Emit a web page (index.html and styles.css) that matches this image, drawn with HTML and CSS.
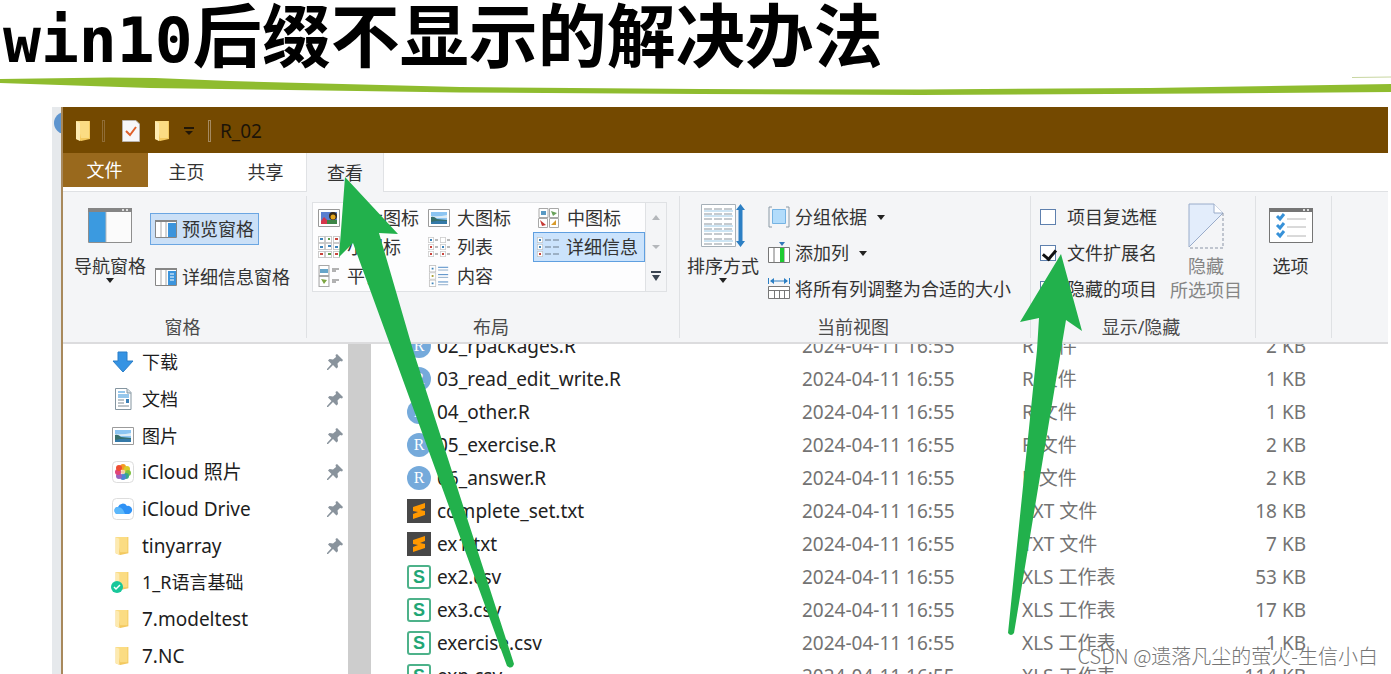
FILE: index.html
```html
<!DOCTYPE html>
<html lang="zh-CN">
<head>
<meta charset="utf-8">
<title>win10后缀不显示的解决办法</title>
<link rel="stylesheet" href="styles.css">
</head>
<body>
<svg class="defs" aria-hidden="true">
  <symbol id="folder" viewBox="0 0 16 22"><path d="M1 1h14v18l-9 2-5-2z" fill="#f3c95f"/><path d="M2 1h12v17H6z" fill="#fbdc83"/><path d="M1 1l4 2v18l-4-2z" fill="#fdeab0"/></symbol>
  <symbol id="pin" viewBox="0 0 16 16"><path d="M10 0l6 6-1 1.500-2-.5-2.500 2.500.5 3.500-1.500 1.500-3.500-3.500L1 16H0v-1l4.500-5L1 6.500 2.500 5l3.500.5L9 3l-.5-2z" fill="#89939c"/></symbol>
  <symbol id="photo" viewBox="0 0 22 18"><path d="M.5.500h21v17H.5z" fill="#fff" stroke="#9b9b9b"/><path d="M3 3h16v12H3z" fill="#8cc5f2"/><path d="M3 7q8 1 16-1v3H3z" fill="#dcecf6"/><path d="M3 8q3-1 6 2l10 1v4H3z" fill="#376f6b"/><path d="M3 13q8-2 16-1v3H3z" fill="#3479a8"/></symbol>
  <symbol id="r" viewBox="0 0 24 24"><circle cx="12" cy="12" r="12" fill="#75aadb"/><text x="12" y="17" text-anchor="middle" class="r-letter">R</text></symbol>
  <symbol id="sub" viewBox="0 0 24 24"><path d="M0 0h24v24H0z" fill="#474747"/><path d="M6 8l12-4v5l-5 2 5 1v4L6 20v-5l5-2-5-1z" fill="#ff9800"/></symbol>
  <symbol id="xls" viewBox="0 0 24 24"><rect x="1" y="1" width="22" height="22" rx="2" fill="#fff" stroke="#4db28a" stroke-width="2"/><text x="12" y="18" text-anchor="middle" class="s-letter">S</text></symbol>
  <symbol id="tile" viewBox="0 0 10 10"><path d="M.5.500h9v9h-9z" fill="#fff" stroke="#a8a8a8"/></symbol>
</svg>

<h1 class="title"><span class="latin">win10</span>后缀不显示的解决办法</h1>
<svg class="swoosh" viewBox="0 76 1391 31" preserveAspectRatio="none" aria-hidden="true"><path d="M0 79L110 77.500 155 78 230 81 460 87 700 89 920 89.500 1150 88 1391 84V92L1200 93.500 920 95 700 94 460 92.500 150 88 0 83z" fill="#8fbc2f"/><path d="M1352 77.500L1391 77" stroke="#c8d6a0"/></svg>

<main class="stage">
  <div class="behind"><svg class="behind-dot" viewBox="0 0 9 24"><circle cx="13" cy="12" r="11" fill="#5e95cf"/></svg></div>
  <section class="window">
    <header class="titlebar">
      <svg class="tb-folder"><use href="#folder"/></svg>
      <span class="tb-bar"></span>
      <svg class="tb-doc" viewBox="0 0 18 22"><path d="M.5.500H14l3.500 3.500v17.500H.5z" fill="#f7f7f9" stroke="#b8b2ac"/><path d="M4 11l4 4 6-8" fill="none" stroke="#e0602a" stroke-width="2"/></svg>
      <svg class="tb-folder"><use href="#folder"/></svg>
      <svg class="tb-more" viewBox="0 0 10 8"><path d="M0 0h10v2H0zM1 4h8L5 8z" fill="#211708"/></svg>
      <span class="tb-bar light"></span>
      <span class="tb-name">R_02</span>
    </header>

    <nav class="tabs">
      <button class="tab file">文件</button>
      <button class="tab">主页</button>
      <button class="tab">共享</button>
      <button class="tab active">查看</button>
    </nav>

    <div class="ribbon">
      <div class="group g-panes">
        <div class="group-body">
          <button class="big">
            <span class="big-icon"><svg width="44" height="35" viewBox="0 0 44 35"><path d="M.5.500h43v34H.5z" fill="#fbfbfb" stroke="#8e8e8e"/><path d="M0 0h44v4H0z" fill="#858585"/><path d="M34 1h2v2h-2zM38 1h2v2h-2z" fill="#ddd"/><path d="M1 4h17v30H1z" fill="#3b9ae0"/><path d="M18 4v30" stroke="#bbb"/></svg></span>
            <span>导航窗格</span><span class="caret"></span>
          </button>
          <div class="pane-list">
            <button class="small on"><svg width="22" height="18" viewBox="0 0 22 18"><path d="M.5.500h21v17H.5z" fill="#fff" stroke="#868686"/><path d="M0 0h22v2H0z" fill="#868686"/><path d="M6 2v15M11 2v15" stroke="#aaa"/><path d="M13 3h8v14h-8z" fill="#3b94dc"/></svg>预览窗格</button>
            <button class="small"><svg width="22" height="18" viewBox="0 0 22 18"><path d="M.5.500h21v17H.5z" fill="#fff" stroke="#868686"/><path d="M0 0h22v2H0z" fill="#868686"/><path d="M6 2v15M11 2v15" stroke="#aaa"/><path d="M13 3h8v14h-8z" fill="#3b94dc"/><path d="M15 6h4M15 9h4M15 12h4" stroke="#fff"/></svg>详细信息窗格</button>
          </div>
        </div>
        <div class="group-label">窗格</div>
      </div>

      <div class="group g-layout">
        <div class="group-body">
          <div class="gallery">
            <div class="cells">
              <button class="cell"><svg viewBox="0 0 22 22"><path d="M.5 2.500h21v17H.5z" fill="#fff" stroke="#999"/><path d="M3 5h16v12H3z" fill="#5a7fd0"/><path d="M3 14l3-4 3 3v4H3z" fill="#d5364b"/><path d="M9 13h10v4H9z" fill="#3d8547"/><circle cx="15" cy="9" r="4" fill="#372a1c"/><circle cx="15" cy="10" r="2.500" fill="#e4a51d"/></svg>超大图标</button>
              <button class="cell"><svg viewBox="0 -2 22 22"><use href="#photo" width="22" height="18"/></svg>大图标</button>
              <button class="cell"><svg viewBox="0 0 22 22"><use href="#tile" x="0" y="1" width="11" height="10"/><use href="#tile" x="11" y="1" width="10" height="10"/><use href="#tile" x="0" y="11" width="10" height="10"/><use href="#tile" x="11" y="11" width="10" height="10"/><path d="M3 4h5v4H3z" fill="#5a9ac4"/><path d="M13 4l6 2-4 3z" fill="#68a159"/><path d="M2 13l6 5-4 1z" fill="#c63a36"/><path d="M13 18l5-5v5z" fill="#d89a2a"/></svg>中图标</button>
              <button class="cell"><svg viewBox="0 0 22 22"><use href="#tile" width="7" height="7"/><use href="#tile" x="7" width="7" height="7"/><use href="#tile" x="15" width="7" height="7"/><use href="#tile" y="7" width="7" height="7"/><use href="#tile" x="7" y="7" width="7" height="7"/><use href="#tile" x="15" y="7" width="7" height="7"/><use href="#tile" y="15" width="7" height="7"/><use href="#tile" x="7" y="15" width="7" height="7"/><use href="#tile" x="15" y="15" width="7" height="7"/><path d="M2 3h3M10 10h3M2 11h3M17 11h3" stroke="#3f84ba" stroke-width="2"/><path d="M17 3h3M2 18h3M17 18h3" stroke="#c8443c" stroke-width="2"/><path d="M10 3h2M10 18h3" stroke="#5a9a48" stroke-width="2"/></svg>小图标</button>
              <button class="cell"><svg viewBox="0 0 22 22"><use href="#tile" y="1" width="6" height="6"/><use href="#tile" y="8" width="6" height="6"/><use href="#tile" y="15" width="6" height="6"/><use href="#tile" x="12" y="1" width="6" height="6"/><use href="#tile" x="12" y="8" width="6" height="6"/><use href="#tile" x="12" y="15" width="6" height="6"/><path d="M7 4h3M7 11h3M7 18h3M19 4h3M19 11h3M19 18h3" stroke="#777"/><path d="M2 4h2M14 11h2" stroke="#3f84ba" stroke-width="2"/><path d="M2 11h2M2 18h2M14 18h2" stroke="#c8443c" stroke-width="2"/></svg>列表</button>
              <button class="cell on"><svg viewBox="0 0 22 22"><use href="#tile" y="1" width="6" height="6"/><use href="#tile" y="8" width="6" height="6"/><use href="#tile" y="15" width="6" height="6"/><path d="M8 4h6M16 4h6M8 11h6M16 11h6M8 18h6M16 18h6" stroke="#6d7c8c"/><path d="M2 4h2M2 11h2" stroke="#3f84ba" stroke-width="2"/><path d="M2 18h2" stroke="#c8443c" stroke-width="2"/></svg>详细信息</button>
              <button class="cell"><svg viewBox="0 0 22 22"><use href="#tile" width="12" height="11"/><use href="#tile" y="11" width="12" height="11"/><path d="M2 4h8v4H2z" fill="#67a5c9"/><path d="M3 14l6 1-3 4z" fill="#7da542"/><path d="M14 4h7M14 6h4M14 15h7M14 17h4" stroke="#666"/></svg>平铺</button>
              <button class="cell"><svg viewBox="0 0 22 24"><use href="#tile" width="8" height="8"/><use href="#tile" y="8" width="8" height="8"/><use href="#tile" y="16" width="8" height="8"/><path d="M10 2.500h11M10 10.500h11M10 18.500h11" stroke="#3f7fc0"/><path d="M10 5.500h11M10 13.500h11M10 21.500h11" stroke="#8aa9c8"/><path d="M3 4h2M3 20h2" stroke="#3f84ba" stroke-width="2"/><path d="M3 12h2" stroke="#a59b2a" stroke-width="2"/></svg>内容</button>
            </div>
            <div class="spin">
              <button aria-label="向上"><svg viewBox="0 0 8 6"><path d="M0 5l4-5 4 5z" fill="#b4b7bb"/></svg></button>
              <button aria-label="向下"><svg viewBox="0 0 8 6"><path d="M0 1l4 4 4-4z" fill="#b4b7bb"/></svg></button>
              <button aria-label="更多"><svg class="more" viewBox="0 0 10 10"><path d="M0 0h10v2H0zM1 4h8L5 10z" fill="#3c4652"/></svg></button>
            </div>
          </div>
        </div>
        <div class="group-label">布局</div>
      </div>

      <div class="group g-view">
        <div class="group-body">
          <button class="big">
            <span class="big-icon"><svg width="44" height="44" viewBox="0 0 44 44"><path d="M.5.500h34v42H.5z" fill="#fff" stroke="#a6b0b8"/><path d="M3 5h29M3 10h29M3 15h29M3 20h29M3 25h29M3 30h29M3 35h29M3 40h29" stroke="#8c969e" stroke-dasharray="8 2"/><path d="M3 7h29M3 12h29M3 22h29M3 27h29M3 37h29" stroke="#9ccbe8"/><path d="M39.500 4v36" stroke="#2c7fc4" stroke-width="4"/><path d="M35 6l4.500-6L44 6zM35 37l4.500 6 4.500-6z" fill="#2c7fc4"/></svg></span>
            <span>排序方式</span><span class="caret"></span>
          </button>
          <div class="lines">
            <button class="line"><svg viewBox="0 0 22 22"><path d="M4 1H1v20h3M18 1h3v20h-3" fill="none" stroke="#8b9aa6"/><path d="M4.500 3.500h13v14h-13z" fill="#b2dcfb" stroke="#76b3e2"/></svg>分组依据<span class="caret"></span></button>
            <button class="line"><svg viewBox="0 0 22 22"><path d="M.5 5.500h21v15H.5zM6 6v14M16 6v14" fill="#fff" stroke="#777"/><path d="M12 6h4v14h-4z" fill="#1ecb32"/><path d="M11 0h6l-3 4z" fill="#3378b8"/></svg>添加列<span class="caret"></span></button>
            <button class="line"><svg viewBox="0 0 22 22"><path d="M.5 0v6M21.500 0v6M3 3h16" stroke="#2c7fc4"/><path d="M2 3l4-3v6zM20 3l-4-3v6z" fill="#2c7fc4"/><path d="M.5 8.500h21v12H.5zM0 12.500h22M6.500 13v8M11.500 13v8M16.500 13v8" fill="#fff" stroke="#777"/></svg>将所有列调整为合适的大小</button>
          </div>
        </div>
        <div class="group-label">当前视图</div>
      </div>

      <div class="group g-show">
        <div class="group-body">
          <div class="lines">
            <label class="line"><input type="checkbox">项目复选框</label>
            <label class="line"><input type="checkbox" checked>文件扩展名</label>
            <label class="line"><input type="checkbox">隐藏的项目</label>
          </div>
          <button class="big off" disabled>
            <span class="big-icon"><svg width="36" height="46" viewBox="0 0 36 46"><path d="M1 1h25l9 9L1 44z" fill="#e3edfb" stroke="#9aacca"/><path d="M26 1v9h9" fill="#fff" stroke="#9aacca"/><path d="M35 10v35H1" fill="none" stroke="#8b95a6" stroke-dasharray="3 2"/></svg></span>
            <span>隐藏</span><span>所选项目</span>
          </button>
        </div>
        <div class="group-label">显示/隐藏</div>
      </div>

      <div class="group g-opt">
        <div class="group-body">
          <button class="big">
            <span class="big-icon"><svg width="44" height="35" viewBox="0 0 44 35"><path d="M.5.500h43v34H.5z" fill="#fff" stroke="#757575"/><path d="M0 0h44v4H0z" fill="#757575"/><path d="M34 1h2v2h-2zM38 1h2v2h-2z" fill="#ddd"/><path d="M18 11h19M18 19h19M18 28h19" stroke="#b4b4b4"/><path d="M8 8l3 3 4-5M8 17l3 3 4-5M8 25l3 3 4-5" fill="none" stroke="#3791d8" stroke-width="3"/></svg></span>
            <span>选项</span>
          </button>
        </div>
      </div>
    </div>

    <div class="content">
      <nav class="side">
        <a href="#" class="zh"><svg viewBox="0 0 22 22"><path d="M6 1h9v9h6L11 21 1 10h5z" fill="#3593e3" stroke="#2b7fc9"/></svg><span>下载</span><svg class="pin"><use href="#pin"/></svg></a>
        <a href="#" class="zh"><svg viewBox="0 0 22 22"><path d="M3.500.500H15l4 4v17H3.500z" fill="#fff" stroke="#8495a0"/><path d="M15 1v4h4" fill="#d7e2e8" stroke="#8495a0"/><path d="M6 4h7M6 7h11M6 9h11" stroke="#2f8fd8" stroke-width="1"/><path d="M6 12h6M6 15h6M6 18h11" stroke="#7d8b94"/><path d="M14 11h3v4h-3z" fill="#3b7fb5"/></svg><span>文档</span><svg class="pin"><use href="#pin"/></svg></a>
        <a href="#" class="zh"><svg viewBox="0 -2 22 22"><use href="#photo" width="22" height="18"/></svg><span>图片</span><svg class="pin"><use href="#pin"/></svg></a>
        <a href="#"><svg viewBox="0 0 22 22"><rect x=".5" y=".5" width="21" height="21" rx="4" fill="#fff" stroke="#ddd"/><circle cx="11" cy="6" r="3" fill="#f59a23"/><circle cx="15" cy="8" r="3" fill="#d8cb2a"/><circle cx="16" cy="12" r="3" fill="#7fc241"/><circle cx="14" cy="15" r="3" fill="#37a68c"/><circle cx="11" cy="16" r="3" fill="#4c84d6"/><circle cx="7" cy="15" r="3" fill="#9a62bd"/><circle cx="6" cy="11" r="3" fill="#e0457a"/><circle cx="7" cy="7" r="3" fill="#ee4d32"/><circle cx="11" cy="11" r="2" fill="#f4c9a0"/></svg><span>iCloud 照片</span><svg class="pin"><use href="#pin"/></svg></a>
        <a href="#"><svg viewBox="0 0 22 22"><rect x=".5" y=".5" width="21" height="21" rx="4" fill="#fff" stroke="#ddd"/><path d="M6 16a3.500 3.500 0 010-7 5 5 0 019-1 4 4 0 012 8z" fill="#2f92f5"/><path d="M6 16a3.500 3.500 0 010-7q5 0 7 7z" fill="#5cb8fb"/></svg><span>iCloud Drive</span><svg class="pin"><use href="#pin"/></svg></a>
        <a href="#"><svg viewBox="0 0 22 22"><use href="#folder" x="2" y="1" width="16" height="20"/></svg><span>tinyarray</span><svg class="pin"><use href="#pin"/></svg></a>
        <a href="#" class="zh"><svg viewBox="0 0 22 22"><use href="#folder" x="2" y="0" width="16" height="20"/><circle cx="5" cy="16" r="6" fill="#18c79a"/><path d="M2 16l2 2 4-4" fill="none" stroke="#fff" stroke-width="1.500"/></svg><span>1_R语言基础</span></a>
        <a href="#"><svg viewBox="0 0 22 22"><use href="#folder" x="2" y="1" width="16" height="20"/></svg><span>7.modeltest</span></a>
        <a href="#"><svg viewBox="0 0 22 22"><use href="#folder" x="2" y="1" width="16" height="20"/></svg><span>7.NC</span></a>
      </nav>
      <div class="scroll"></div>
      <div class="files">
        <table>
          <colgroup><col class="c-name"><col class="c-date"><col class="c-type"><col class="c-size"><col></colgroup>
          <tbody>
            <tr><td><span class="fname"><svg><use href="#r"/></svg>02_rpackages.R</span></td><td>2024-04-11 16:55</td><td>R 文件</td><td class="num">2 KB</td><td></td></tr>
            <tr><td><span class="fname"><svg><use href="#r"/></svg>03_read_edit_write.R</span></td><td>2024-04-11 16:55</td><td>R 文件</td><td class="num">1 KB</td><td></td></tr>
            <tr><td><span class="fname"><svg><use href="#r"/></svg>04_other.R</span></td><td>2024-04-11 16:55</td><td>R 文件</td><td class="num">1 KB</td><td></td></tr>
            <tr><td><span class="fname"><svg><use href="#r"/></svg>05_exercise.R</span></td><td>2024-04-11 16:55</td><td>R 文件</td><td class="num">2 KB</td><td></td></tr>
            <tr><td><span class="fname"><svg><use href="#r"/></svg>06_answer.R</span></td><td>2024-04-11 16:55</td><td>R 文件</td><td class="num">2 KB</td><td></td></tr>
            <tr><td><span class="fname"><svg><use href="#sub"/></svg>complete_set.txt</span></td><td>2024-04-11 16:55</td><td>TXT 文件</td><td class="num">18 KB</td><td></td></tr>
            <tr><td><span class="fname"><svg><use href="#sub"/></svg>ex1.txt</span></td><td>2024-04-11 16:55</td><td>TXT 文件</td><td class="num">7 KB</td><td></td></tr>
            <tr><td><span class="fname"><svg><use href="#xls"/></svg>ex2.csv</span></td><td>2024-04-11 16:55</td><td>XLS 工作表</td><td class="num">53 KB</td><td></td></tr>
            <tr><td><span class="fname"><svg><use href="#xls"/></svg>ex3.csv</span></td><td>2024-04-11 16:55</td><td>XLS 工作表</td><td class="num">17 KB</td><td></td></tr>
            <tr><td><span class="fname"><svg><use href="#xls"/></svg>exercise.csv</span></td><td>2024-04-11 16:55</td><td>XLS 工作表</td><td class="num">1 KB</td><td></td></tr>
            <tr><td><span class="fname"><svg><use href="#xls"/></svg>exp.csv</span></td><td>2024-04-11 16:55</td><td>XLS 工作表</td><td class="num">114 KB</td><td></td></tr>
          </tbody>
        </table>
      </div>
    </div>
  </section>
</main>

<svg class="arrows" width="1391" height="674" viewBox="0 0 1391 674" aria-hidden="true">
  <path d="M345 177L398 234 379 233 413 350 514 664Q512 670 507 666L392 350 353 243 339 257z" fill="#22b14c"/>
  <path d="M1061 254L1082 331 1066 320 1061 350 1014 633Q1011 637 1008 633L1037 350 1039 318 1020 322z" fill="#22b14c"/>
</svg>
<div class="watermark">CSDN @遗落凡尘的萤火-生信小白</div>
</body>
</html>
```
FILE: styles.css
```css
* { box-sizing: border-box; }
body {
  margin: 0;
  height: 100vh;
  display: flex;
  flex-direction: column;
  position: relative;
  overflow: hidden;
  background: #fff;
  color: #333;
  font: 18px/24px "Noto Sans", "Noto Sans CJK SC", sans-serif;
}
button {
  margin: 0;
  padding: 0;
  border: 0;
  background: none;
  color: inherit;
  font: inherit;
  white-space: nowrap;
}
svg { display: block; flex: none; }
.defs { position: absolute; width: 0; height: 0; }
.r-letter { font: 16px "Liberation Serif", serif; fill: #fff; }
.s-letter { font: bold 18px "Liberation Sans", sans-serif; fill: #21a675; }

.title {
  flex: none;
  margin: 0;
  padding: 0 0 12px 3px;
  font: bold 69px/64px "Noto Sans CJK SC", sans-serif;
  height: 76px;
  color: #000;
  white-space: nowrap;
}
.latin { font-family: "DejaVu Sans Mono", monospace; font-size: 63px; line-height: 48px; }
.swoosh { width: 100%; height: 31px; }

.stage { flex: 1; min-height: 0; display: flex; padding: 0 3px 0 52px; }
.behind { width: 9px; background: #e6e9ec; }
.behind-dot { width: 9px; height: 24px; margin-top: 4px; }
.window {
  flex: 1;
  min-width: 0;
  display: flex;
  flex-direction: column;
  border-left: 2px solid #a8895c;
}

.titlebar {
  flex: none;
  height: 46px;
  display: flex;
  align-items: center;
  padding: 2px 0 0 12px;
  background: #744900;
  color: #1c1408;
}
.tb-folder { width: 16px; height: 22px; }
.tb-bar { width: 3px; height: 22px; margin: 0 17px 0 11px; border: 1px solid #8f6c36; }
.tb-bar.light { margin: 0 9px 0 14px; border-color: #a58a60; }
.tb-doc { width: 18px; height: 22px; margin-right: 14px; }
.tb-more { width: 10px; height: 8px; margin-left: 14px; }
.tb-name { font-size: 19px; }

.tabs { flex: none; display: flex; height: 39px; border-bottom: 1px solid #dfe1e4; }
.tab { width: 79px; padding-right: 2px; }
.tab.file { width: 85px; height: 34px; background: #99691d; color: #fff; }
.tab.active { width: 78px; height: 39px; padding: 0; background: #f4f5f7; border: 1px solid #e0e2e5; border-width: 0 1px; }

.ribbon {
  flex: none;
  display: flex;
  background: #f4f5f7;
  height: 152px;
  padding: 4px 0;
  border-bottom: 2px solid #dcdcde;
}
.group { display: flex; flex-direction: column; border-right: 1px solid #dfe1e4; }
.group-body { flex: 1; display: flex; padding-top: 6px; }
.group-label { text-align: center; height: 23px; padding-right: 4px; color: #4a4a4a; }
.g-panes { width: 244px; }
.g-panes .group-body { padding-left: 10px; gap: 3px; }
.g-layout { width: 373px; }
.g-layout .group-body { padding-left: 5px; }
.g-view { width: 351px; }
.g-view .group-body { padding-left: 6px; gap: 8px; }
.g-show { width: 225px; }
.g-show .group-body { padding-left: 9px; gap: 12px; }
.g-opt { width: 76px; }
.g-opt .group-body { padding-right: 6px; justify-content: center; }

.big { display: flex; flex-direction: column; align-items: center; align-self: flex-start; min-width: 74px; }
.g-opt .big { min-width: 0; }
.big-icon { height: 52px; padding-bottom: 5px; display: flex; align-items: center; }
.big.off { color: #858585; }
.caret { border: 4px solid transparent; border-top: 5px solid #222; border-bottom: 0; }
.line .caret { margin-left: 5px; }

.pane-list { display: flex; flex-direction: column; align-items: flex-start; gap: 16px; padding-top: 11px; }
.small { display: flex; align-items: center; gap: 5px; height: 32px; padding: 0 4px; border: 1px solid transparent; }
.small.on { background: #cbe0f7; border-color: #6ba6e2; }

.gallery { display: flex; height: 90px; background: #fdfdfe; border: 1px solid #dfe1e4; }
.cells { display: grid; grid-template-columns: 110px 110px 112px; grid-template-rows: repeat(3, 1fr); }
.cell { display: flex; align-items: center; gap: 7px; padding: 0 4px; border: 1px solid transparent; }
.cell svg { width: 22px; height: 22px; }
.cell.on { background: #cbe3fc; border-color: #5f9fe0; padding-left: 3px; }
.spin { width: 21px; display: flex; flex-direction: column; background: #f4f5f7; border-left: 1px solid #dfe1e4; }
.spin button { flex: 1; display: flex; align-items: center; justify-content: center; }
.spin svg { width: 8px; height: 6px; }
.spin .more { width: 10px; height: 10px; }

.lines { display: flex; flex-direction: column; align-items: flex-start; gap: 12px; padding-top: 3px; }
.line { display: flex; align-items: center; gap: 5px; white-space: nowrap; }
.line svg { width: 22px; height: 22px; }
.line input {
  appearance: none;
  width: 16px;
  height: 16px;
  margin: 0 6px 0 0;
  border: 1px solid #5e80ae;
  background: #fff;
}
.line input:checked::after {
  content: "";
  display: block;
  width: 6px;
  height: 10px;
  margin: 1px 0 0 4px;
  border: solid #111;
  border-width: 0 3px 3px 0;
  transform: rotate(40deg);
}

.content { flex: 1; min-height: 0; display: flex; color: #222; font-size: 19px; }
.side { width: 285px; display: grid; grid-auto-rows: 1fr; padding: 0 5px 0 49px; }
.side a { display: flex; align-items: center; gap: 8px; color: #1d1d1d; text-decoration: none; font-size: 19px; }
.side a.zh { font-size: 18px; }
.side a > svg { width: 22px; height: 22px; overflow: visible; }
.side a span { flex: 1; white-space: nowrap; }
.side a .pin { width: 16px; height: 16px; }
.scroll { width: 23px; background: #cdcdcd; }
.files { flex: 1; overflow: hidden; }
table { width: 100%; margin-top: -15px; border-collapse: collapse; table-layout: fixed; color: #737373; font-size: 19px; }
td { height: 33px; padding: 0; white-space: nowrap; }
.c-name { width: 431px; }
.c-date { width: 220px; }
.c-type { width: 164px; }
.c-size { width: 120px; }
.num { text-align: right; }
.fname { display: flex; align-items: center; gap: 6px; padding-left: 36px; color: #222; }
.fname svg { width: 24px; height: 24px; }

.arrows { position: absolute; left: 0; top: 0; pointer-events: none; }
.watermark {
  position: absolute;
  right: 13px;
  bottom: 4px;
  color: #757575;
  font: 300 20px/28px "Noto Sans CJK SC", sans-serif;
  text-shadow: 1px 1px 0 #fff;
}
```
